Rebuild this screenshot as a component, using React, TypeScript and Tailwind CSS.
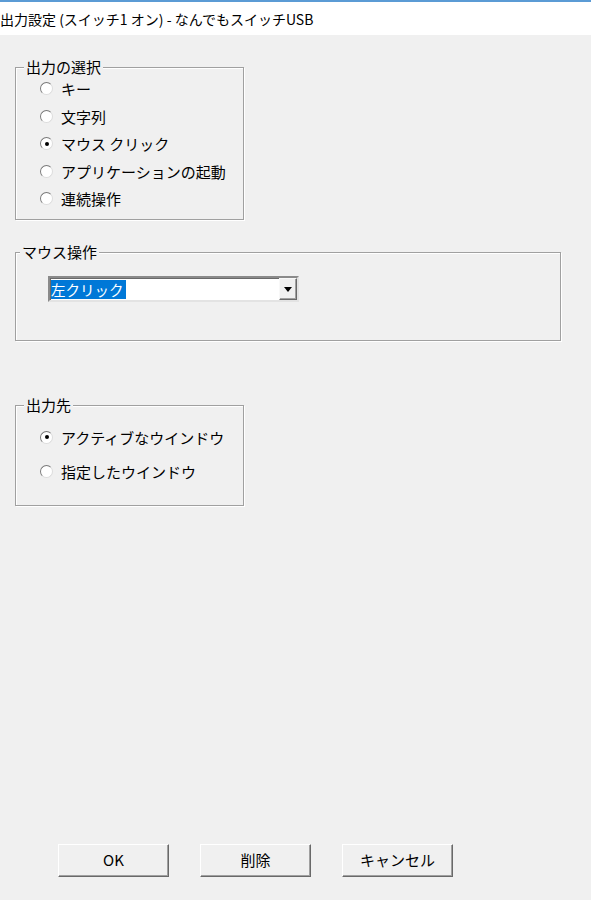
import React from "react";

const font = { fontFamily: '"Noto Sans CJK JP", "Noto Sans", sans-serif' };

function Radio({ label, checked }: { label: string; checked?: boolean }) {
  return (
    <div className="flex items-center gap-[8px]">
      <div className="relative w-[13px] h-[13px] rounded-full bg-white border-[1.5px] border-t-[#7a7a7a] border-l-[#7a7a7a] border-r-[#dcdcdc] border-b-[#dcdcdc] flex items-center justify-center">
        {checked && <div className="w-[4px] h-[4px] rounded-full bg-black" />}
      </div>
      <span className="text-[15px] leading-none text-black whitespace-pre">{label}</span>
    </div>
  );
}

function Group({
  label,
  className,
  labelLeft,
  children,
}: {
  label: string;
  className: string;
  labelLeft: string;
  children: React.ReactNode;
}) {
  return (
    <div
      className={`relative border border-[#a0a0a0] shadow-[inset_1px_1px_0_#ffffff,1px_1px_0_#ffffff] ${className}`}
    >
      <span
        className={`absolute -top-[11px] ${labelLeft} px-[2px] bg-[#f0f0f0] text-[15px] leading-[20px] text-black`}
      >
        {label}
      </span>
      {children}
    </div>
  );
}

function Button({ label }: { label: string }) {
  return (
    <div className="w-[111px] h-[33px] flex items-center justify-center bg-[#f0f0f0] border border-t-white border-l-white border-r-[#696969] border-b-[#696969] shadow-[inset_-1px_-1px_0_#a0a0a0] text-[15px] text-black">
      {label}
    </div>
  );
}

export default function App() {
  return (
    <div className="w-[591px] h-[900px] bg-[#f0f0f0] flex flex-col overflow-hidden" style={font}>
      <div className="h-[35px] shrink-0 bg-white border-t-2 border-[#5b9bd5] flex items-center">
        <span className="text-[14px] text-black whitespace-pre leading-none">
          出力設定 (スイッチ1 オン) - なんでもスイッチUSB
        </span>
      </div>

      <div className="flex-1 flex flex-col px-[15px]">
        <Group label="出力の選択" className="mt-[32px] w-[229px] h-[153px] shrink-0" labelLeft="left-[8px]">
          <div className="flex flex-col pt-[7px] pl-[24px]">
            {[
              ["キー", false],
              ["文字列", false],
              ["マウス クリック", true],
              ["アプリケーションの起動", false],
              ["連続操作", false],
            ].map(([l, c]) => (
              <div key={l as string} className="h-[27.5px] flex items-center">
                <Radio label={l as string} checked={c as boolean} />
              </div>
            ))}
          </div>
        </Group>

        <Group label="マウス操作" className="mt-[32px] w-[546px] h-[89px] shrink-0" labelLeft="left-[4px]">
          <div className="ml-[32px] mt-[23px] w-[251px] h-[26px] bg-white border-2 border-t-[#8a8a8a] border-l-[#8a8a8a] border-r-[#e3e3e3] border-b-[#e3e3e3] shadow-[inset_1px_1px_0_#6a6a6a] flex items-stretch">
            <div className="flex-1 flex items-center pl-[1px]">
              <span className="bg-[#0078d7] text-white text-[14.5px] leading-[19px] pr-[2px]">左クリック</span>
            </div>
            <div className="w-[18px] bg-[#f0f0f0] border border-t-[#f8f8f8] border-l-[#f8f8f8] border-r-[#696969] border-b-[#696969] shadow-[inset_-1px_-1px_0_#a0a0a0] flex items-center justify-center">
              <svg width="8" height="5" viewBox="0 0 8 5">
                <polygon points="0,0 8,0 4,5" fill="#000" />
              </svg>
            </div>
          </div>
        </Group>

        <Group label="出力先" className="mt-[64px] w-[229px] h-[101px] shrink-0" labelLeft="left-[8px]">
          <div className="flex flex-col pt-[14px] pl-[24px]">
            <div className="h-[34px] flex items-center">
              <Radio label="アクティブなウインドウ" checked />
            </div>
            <div className="h-[34px] flex items-center">
              <Radio label="指定したウインドウ" />
            </div>
          </div>
        </Group>

        <div className="mt-auto mb-[23px] flex gap-[31px] pl-[43px]">
          <Button label="OK" />
          <Button label="削除" />
          <Button label="キャンセル" />
        </div>
      </div>
    </div>
  );
}
